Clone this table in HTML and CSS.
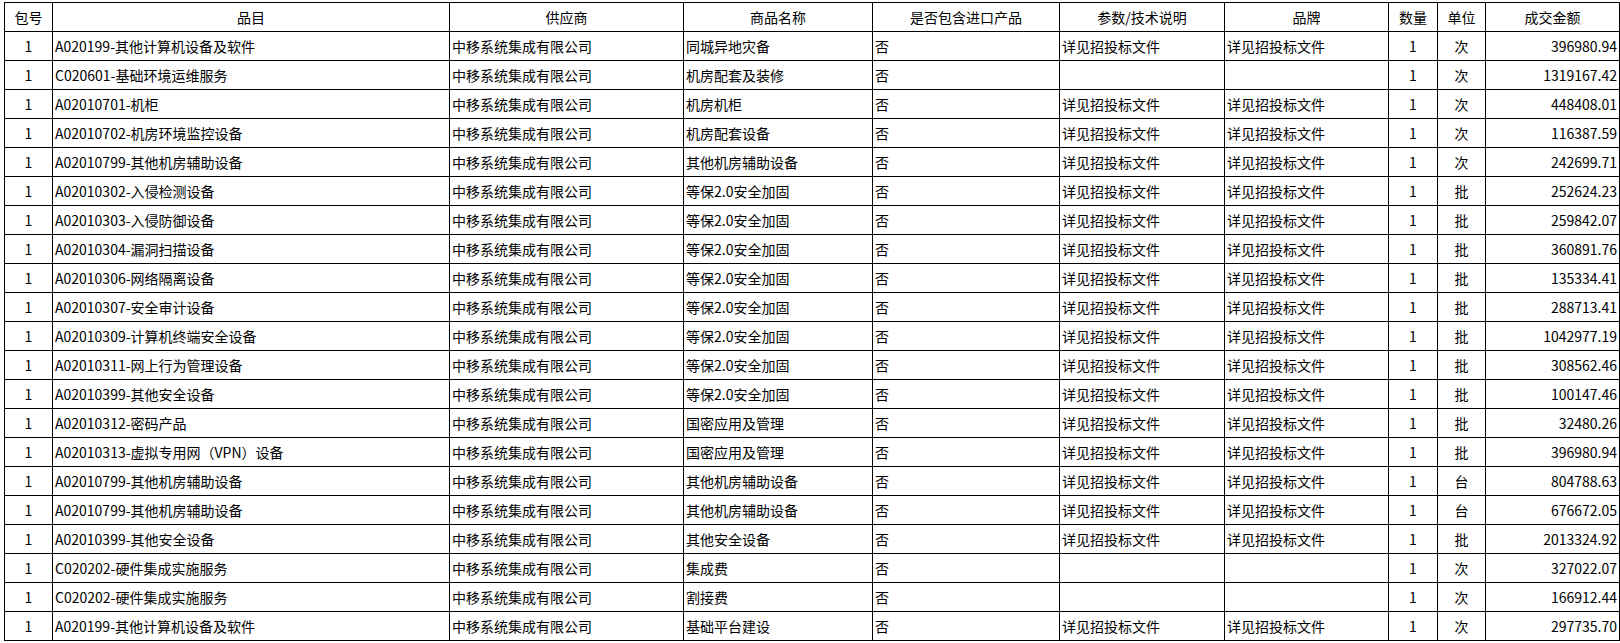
FILE: index.html
```html
<!DOCTYPE html>
<html lang="zh-CN">
<head>
<meta charset="utf-8">
<title>成交明细</title>
<link rel="stylesheet" href="styles.css">
</head>
<body>
<div class="page">
<table class="deal">
<colgroup>
<col class="c-pkg"><col class="c-cat"><col class="c-sup"><col class="c-name"><col class="c-imp"><col class="c-spec"><col class="c-brand"><col class="c-qty"><col class="c-unit"><col class="c-amt">
</colgroup>
<thead>
<tr><th>包号</th><th>品目</th><th>供应商</th><th>商品名称</th><th>是否包含进口产品</th><th>参数/技术说明</th><th>品牌</th><th>数量</th><th>单位</th><th>成交金额</th></tr>
</thead>
<tbody>
<tr><td class="ctr">1</td><td>A020199-其他计算机设备及软件</td><td>中移系统集成有限公司</td><td>同城异地灾备</td><td>否</td><td>详见招投标文件</td><td>详见招投标文件</td><td class="ctr">1</td><td class="ctr">次</td><td class="num">396980.94</td></tr>
<tr><td class="ctr">1</td><td>C020601-基础环境运维服务</td><td>中移系统集成有限公司</td><td>机房配套及装修</td><td>否</td><td></td><td></td><td class="ctr">1</td><td class="ctr">次</td><td class="num">1319167.42</td></tr>
<tr><td class="ctr">1</td><td>A02010701-机柜</td><td>中移系统集成有限公司</td><td>机房机柜</td><td>否</td><td>详见招投标文件</td><td>详见招投标文件</td><td class="ctr">1</td><td class="ctr">次</td><td class="num">448408.01</td></tr>
<tr><td class="ctr">1</td><td>A02010702-机房环境监控设备</td><td>中移系统集成有限公司</td><td>机房配套设备</td><td>否</td><td>详见招投标文件</td><td>详见招投标文件</td><td class="ctr">1</td><td class="ctr">次</td><td class="num">116387.59</td></tr>
<tr><td class="ctr">1</td><td>A02010799-其他机房辅助设备</td><td>中移系统集成有限公司</td><td>其他机房辅助设备</td><td>否</td><td>详见招投标文件</td><td>详见招投标文件</td><td class="ctr">1</td><td class="ctr">次</td><td class="num">242699.71</td></tr>
<tr><td class="ctr">1</td><td>A02010302-入侵检测设备</td><td>中移系统集成有限公司</td><td>等保2.0安全加固</td><td>否</td><td>详见招投标文件</td><td>详见招投标文件</td><td class="ctr">1</td><td class="ctr">批</td><td class="num">252624.23</td></tr>
<tr><td class="ctr">1</td><td>A02010303-入侵防御设备</td><td>中移系统集成有限公司</td><td>等保2.0安全加固</td><td>否</td><td>详见招投标文件</td><td>详见招投标文件</td><td class="ctr">1</td><td class="ctr">批</td><td class="num">259842.07</td></tr>
<tr><td class="ctr">1</td><td>A02010304-漏洞扫描设备</td><td>中移系统集成有限公司</td><td>等保2.0安全加固</td><td>否</td><td>详见招投标文件</td><td>详见招投标文件</td><td class="ctr">1</td><td class="ctr">批</td><td class="num">360891.76</td></tr>
<tr><td class="ctr">1</td><td>A02010306-网络隔离设备</td><td>中移系统集成有限公司</td><td>等保2.0安全加固</td><td>否</td><td>详见招投标文件</td><td>详见招投标文件</td><td class="ctr">1</td><td class="ctr">批</td><td class="num">135334.41</td></tr>
<tr><td class="ctr">1</td><td>A02010307-安全审计设备</td><td>中移系统集成有限公司</td><td>等保2.0安全加固</td><td>否</td><td>详见招投标文件</td><td>详见招投标文件</td><td class="ctr">1</td><td class="ctr">批</td><td class="num">288713.41</td></tr>
<tr><td class="ctr">1</td><td>A02010309-计算机终端安全设备</td><td>中移系统集成有限公司</td><td>等保2.0安全加固</td><td>否</td><td>详见招投标文件</td><td>详见招投标文件</td><td class="ctr">1</td><td class="ctr">批</td><td class="num">1042977.19</td></tr>
<tr><td class="ctr">1</td><td>A02010311-网上行为管理设备</td><td>中移系统集成有限公司</td><td>等保2.0安全加固</td><td>否</td><td>详见招投标文件</td><td>详见招投标文件</td><td class="ctr">1</td><td class="ctr">批</td><td class="num">308562.46</td></tr>
<tr><td class="ctr">1</td><td>A02010399-其他安全设备</td><td>中移系统集成有限公司</td><td>等保2.0安全加固</td><td>否</td><td>详见招投标文件</td><td>详见招投标文件</td><td class="ctr">1</td><td class="ctr">批</td><td class="num">100147.46</td></tr>
<tr><td class="ctr">1</td><td>A02010312-密码产品</td><td>中移系统集成有限公司</td><td>国密应用及管理</td><td>否</td><td>详见招投标文件</td><td>详见招投标文件</td><td class="ctr">1</td><td class="ctr">批</td><td class="num">32480.26</td></tr>
<tr><td class="ctr">1</td><td>A02010313-虚拟专用网（VPN）设备</td><td>中移系统集成有限公司</td><td>国密应用及管理</td><td>否</td><td>详见招投标文件</td><td>详见招投标文件</td><td class="ctr">1</td><td class="ctr">批</td><td class="num">396980.94</td></tr>
<tr><td class="ctr">1</td><td>A02010799-其他机房辅助设备</td><td>中移系统集成有限公司</td><td>其他机房辅助设备</td><td>否</td><td>详见招投标文件</td><td>详见招投标文件</td><td class="ctr">1</td><td class="ctr">台</td><td class="num">804788.63</td></tr>
<tr><td class="ctr">1</td><td>A02010799-其他机房辅助设备</td><td>中移系统集成有限公司</td><td>其他机房辅助设备</td><td>否</td><td>详见招投标文件</td><td>详见招投标文件</td><td class="ctr">1</td><td class="ctr">台</td><td class="num">676672.05</td></tr>
<tr><td class="ctr">1</td><td>A02010399-其他安全设备</td><td>中移系统集成有限公司</td><td>其他安全设备</td><td>否</td><td>详见招投标文件</td><td>详见招投标文件</td><td class="ctr">1</td><td class="ctr">批</td><td class="num">2013324.92</td></tr>
<tr><td class="ctr">1</td><td>C020202-硬件集成实施服务</td><td>中移系统集成有限公司</td><td>集成费</td><td>否</td><td></td><td></td><td class="ctr">1</td><td class="ctr">次</td><td class="num">327022.07</td></tr>
<tr><td class="ctr">1</td><td>C020202-硬件集成实施服务</td><td>中移系统集成有限公司</td><td>割接费</td><td>否</td><td></td><td></td><td class="ctr">1</td><td class="ctr">次</td><td class="num">166912.44</td></tr>
<tr><td class="ctr">1</td><td>A020199-其他计算机设备及软件</td><td>中移系统集成有限公司</td><td>基础平台建设</td><td>否</td><td>详见招投标文件</td><td>详见招投标文件</td><td class="ctr">1</td><td class="ctr">次</td><td class="num">297735.70</td></tr>
</tbody>
</table>
</div>
</body>
</html>
```
FILE: styles.css
```css
html, body {
  margin: 0;
  padding: 0;
  background: #ffffff;
}
body {
  font-family: "Noto Sans CJK SC", "Liberation Sans", sans-serif;
  font-size: 14px;
  color: #000000;
}
.page {
  padding: 2px 0 0 4px;
}
.deal {
  border-collapse: collapse;
  table-layout: fixed;
  width: 1615px;
}
.c-pkg { width: 48px; }
.c-cat { width: 397px; }
.c-sup { width: 234px; }
.c-name { width: 189px; }
.c-imp { width: 187px; }
.c-spec { width: 165px; }
.c-brand { width: 164px; }
.c-qty { width: 49px; }
.c-unit { width: 48px; }
.c-amt { width: 134px; }
.deal th,
.deal td {
  border: 1px solid #000000;
  height: 28px;
  padding: 0 2px;
  line-height: 20px;
  white-space: nowrap;
  overflow: hidden;
  vertical-align: middle;
  text-align: left;
  font-weight: normal;
}
.deal th {
  text-align: center;
}
.deal td.ctr {
  text-align: center;
}
.deal td.num {
  text-align: right;
}
```
